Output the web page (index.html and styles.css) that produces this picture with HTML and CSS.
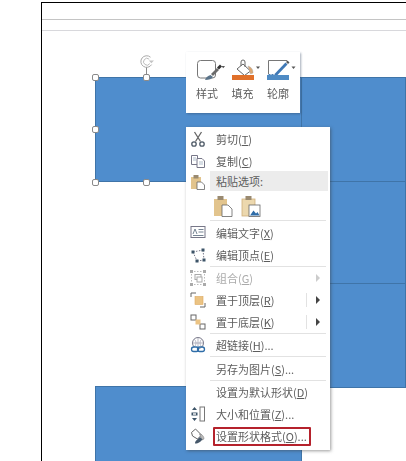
FILE: index.html
```html
<!DOCTYPE html>
<html lang="zh">
<head>
<meta charset="utf-8">
<title>设置形状格式</title>
<link rel="stylesheet" href="styles.css">
</head>
<body>
<div class="frame">
  <div class="ruler-lines"></div>

  <div class="shape s-top"></div>
  <div class="shape s-r1"></div>
  <div class="shape s-r2"></div>
  <div class="shape s-r3"></div>
  <div class="shape s-bottom"></div>

  <span class="handle h1"></span><span class="handle h2"></span><span class="handle h3"></span><span class="handle h4"></span><span class="handle h5"></span>
  <span class="rot-line"></span>
  <svg class="rot" viewBox="0 0 16 16"><path d="M11.500 3.200A5.800 5.800 0 1 0 12.600 10.600" fill="none" stroke="#aaa" stroke-width="1"/><path d="M10.200 5.200A3.400 3.400 0 1 0 10.800 9.600" fill="none" stroke="#bbb" stroke-width="1"/><path d="M9.800 6.500h5.200L12.400 9.200z" fill="#c4c4c4"/></svg>

  <div class="toolbar">
    <div class="tool">
      <div class="tool-icon">
        <svg width="29" height="24" viewBox="0 0 29 24"><rect x="1.500" y="2.500" width="18" height="17.500" rx="3" fill="#fff" stroke="#777" stroke-width="1"/><path d="M9 22c1-3 3-4 5.500-5l2.500 2c-1 2-4 3-8 3z" fill="#5a7389"/><path d="M15 16l6-6 2 2-6 6z" fill="#6b6b6b"/><path d="M21 9.500l3-3 2 2-3 3z" fill="#333"/><path d="M25.500 8h3.500l-1.750 2.200z" fill="#555"/></svg>
      </div>
      <span>样式</span>
    </div>
    <div class="tool">
      <div class="tool-icon">
        <svg width="29" height="24" viewBox="0 0 29 24"><path d="M11 6l7.500 7-6 4.500-7.500-6.500z" fill="#fff" stroke="#666" stroke-width="1"/><path d="M9 8V4a2 2 0 0 1 4 0v5" fill="none" stroke="#666"/><path d="M16 8c3 1 5 3 5 7l-2.500 1z" fill="#dca873" stroke="#aaa" stroke-width=".5"/><path d="M24 8.500h4l-2 2.500z" fill="#555"/></svg>
        <i class="bar orange"></i>
      </div>
      <span>填充</span>
    </div>
    <div class="tool">
      <div class="tool-icon">
        <svg width="29" height="24" viewBox="0 0 29 24"><path d="M20 2.500H1.500V16" fill="none" stroke="#777"/><path d="M1.500 16.500h5" stroke="#4a7fb5" stroke-dasharray="2 1"/><path d="M8 15.500l10.500-11 2 2L10 17.500l-3.500 1z" fill="#3f78b5"/><path d="M19 4l1.500-1.500 2 2L21 6z" fill="#555"/><path d="M24.500 8.500h4l-2 2.500z" fill="#555"/></svg>
        <i class="bar blue"></i>
      </div>
      <span>轮廓</span>
    </div>
  </div>

  <div class="menu">
    <div class="item">
      <svg class="ic" viewBox="0 0 16 16"><path d="M4.500 1l6 9.500M11.500 1l-6 9.500" stroke="#666" stroke-width="1.300" fill="none"/><circle cx="4" cy="13" r="2.200" fill="none" stroke="#4d5966" stroke-width="1.300"/><circle cx="12" cy="13" r="2.200" fill="none" stroke="#4d5966" stroke-width="1.300"/></svg>
      <span>剪切(<u>T</u>)</span>
    </div>
    <div class="item">
      <svg class="ic" viewBox="0 0 16 16"><path d="M1.500 2.500h6v9h-6z" fill="#fff" stroke="#778"/><path d="M7 5.500h5l2.500 2.500v6.500H7z" fill="#fff" stroke="#778"/><path d="M3 5h3M3 7h3M9 9h4M9 11h4" stroke="#9ab" stroke-width=".8"/></svg>
      <span>复制(<u>C</u>)</span>
    </div>
    <div class="item head">
      <svg class="ic" viewBox="0 0 16 16"><rect x="1" y="3" width="10" height="12" fill="#e2c48d"/><rect x="3.500" y="1" width="5" height="3.500" fill="#9a8a70"/><path d="M7 8h4.500L14.500 11v4.500H7z" fill="#fff" stroke="#666" stroke-width=".8"/></svg>
      <b>粘贴选项:</b>
    </div>
    <div class="paste">
      <svg class="ic-l" viewBox="0 0 20 22"><rect x="1" y="4" width="13" height="17" fill="#e2c48d"/><rect x="4.500" y="1" width="6" height="4" fill="#9a8a70"/><path d="M9 10h6l4 4v7.500H9z" fill="#fff" stroke="#666" stroke-width=".8"/></svg>
      <svg class="ic-l" viewBox="0 0 20 22"><rect x="1" y="4" width="13" height="17" fill="#ecd8ae" stroke="#d0b07a" stroke-width=".8"/><rect x="4.500" y="1" width="6" height="4" fill="#9a8a70"/><rect x="8" y="10" width="11" height="11.500" fill="#fff" stroke="#666" stroke-width=".8"/><path d="M9 20.500l3.500-5 2.500 3 1.500-1.500 2 3.500z" fill="#2f6da8"/></svg>
    </div>
    <hr>
    <div class="item tall">
      <svg class="ic" viewBox="0 0 16 16"><rect x="1" y="2.500" width="14" height="11" fill="#fff" stroke="#778"/><path d="M3 10l2-5 2 5M8.500 5.500h5M8.500 8h5M3 11.500h10.500" stroke="#678" stroke-width=".9" fill="none"/></svg>
      <span>编辑文字(<u>X</u>)</span>
    </div>
    <div class="item">
      <svg class="ic" viewBox="0 0 16 16"><path d="M3 5l4 9M3 5l10-2M13 3l1 10M7 14l7-1" stroke="#778" stroke-dasharray="1.500 1.500" fill="none"/><path d="M1.500 3.500h3v3h-3zM11.500 1.500h3v3h-3zM12.500 11.500h3v3h-3zM5.500 12.500h3v3h-3z" fill="#3d5468"/></svg>
      <span>编辑顶点(<u>E</u>)</span>
    </div>
    <hr>
    <div class="item off">
      <svg class="ic" viewBox="0 0 16 16"><path d="M1.500 4v8M14.500 4v8M4 1.500h8M4 14.500h8" stroke="#bbb" stroke-dasharray="1.500 1.500"/><rect x="5" y="4.500" width="6" height="5" fill="none" stroke="#aaa"/><rect x="7" y="7" width="5" height="5" fill="#fff" stroke="#aaa"/><path d="M0 0h3v3H0zM13 0h3v3h-3zM0 13h3v3H0zM13 13h3v3h-3z" fill="#aaa"/></svg>
      <span>组合(<u>G</u>)</span>
      <i class="arrow"></i>
    </div>
    <div class="item">
      <svg class="ic" viewBox="0 0 16 16"><path d="M1 5V1h5M15 11v4h-5" fill="none" stroke="#666"/><rect x="5" y="4.500" width="8" height="8" fill="#ebc383" stroke="#dca85f" stroke-width=".6"/></svg>
      <span>置于顶层(<u>R</u>)</span>
      <em></em><i class="arrow"></i>
    </div>
    <div class="item">
      <svg class="ic" viewBox="0 0 16 16"><rect x="1" y="1" width="5" height="5" fill="#fff" stroke="#666"/><rect x="10" y="10" width="5" height="5" fill="#fff" stroke="#666"/><rect x="5.500" y="5.500" width="5" height="5" fill="#ebc383"/></svg>
      <span>置于底层(<u>K</u>)</span>
      <em></em><i class="arrow"></i>
    </div>
    <hr>
    <div class="item">
      <svg class="ic" viewBox="0 0 16 16"><circle cx="8" cy="6" r="5.500" fill="#fff" stroke="#778"/><path d="M2.500 6h11M8 .5v11M4.500 2.500c2 2 2 5 0 7M11.500 2.500c-2 2-2 5 0 7" stroke="#99a" stroke-width=".7" fill="none"/><rect x="1.500" y="10" width="7" height="4.500" rx="2.200" fill="#fff" stroke="#2f6da8" stroke-width="1.300"/><rect x="7.500" y="10" width="7" height="4.500" rx="2.200" fill="none" stroke="#2f6da8" stroke-width="1.300"/></svg>
      <span>超链接(<u>H</u>)...</span>
    </div>
    <hr>
    <div class="item tall"><span>另存为图片(<u>S</u>)...</span></div>
    <hr>
    <div class="item"><span>设置为默认形状(<u>D</u>)</span></div>
    <div class="item">
      <svg class="ic" viewBox="0 0 16 16"><rect x="10" y="1" width="4.500" height="14" fill="#fff" stroke="#777"/><path d="M4.500 1l2.500 3H2zM4.500 15L2 12h5zM1.500 6.500h6v3h-6z" fill="#3d5468"/><rect x="3" y="7.300" width="3" height="1.400" fill="#fff"/></svg>
      <span>大小和位置(<u>Z</u>)...</span>
    </div>
    <div class="item">
      <svg class="ic" viewBox="0 0 16 16"><path d="M1.500 4.500l4-3.500 6 6-4 4-5-3z" fill="#fff" stroke="#666"/><path d="M9.500 6c3 .5 4.500 2.500 4.500 5l-2 1z" fill="#bbb" stroke="#777" stroke-width=".5"/><path d="M5 15.500c0-3 3-4.500 5-6.500l2.500 2.500c-2 2-3.500 4-7.500 4z" fill="#46586a"/></svg>
      <span>设置形状格式(<u>O</u>)...</span>
    </div>
    <div class="callout"></div>
  </div>
</div>
</body>
</html>
```
FILE: styles.css
```css
html, body {
  margin: 0;
  padding: 0;
  background: #fff;
}
body {
  width: 406px;
  height: 461px;
  overflow: hidden;
  font-family: "Noto Sans CJK SC", "Noto Sans", sans-serif;
  color: #5c5c5c;
}
.frame {
  position: relative;
  width: 406px;
  height: 461px;
  overflow: hidden;
}
.frame::before {
  content: "";
  position: absolute;
  left: 41px;
  top: 2px;
  right: -4px;
  bottom: -4px;
  border: 1px solid #000;
}
.ruler-lines {
  position: absolute;
  left: 42px;
  right: 0;
  top: 19px;
  height: 10px;
  border-top: 1px solid #c4c4c4;
  border-bottom: 1px solid #d8d8dc;
}
.shape {
  position: absolute;
  box-sizing: border-box;
  background: #4f8dcd;
  border: 1px solid #3f74a8;
}
.s-top { left: 95px; top: 77px; width: 207px; height: 105px; }
.s-r1 { left: 301px; top: 77px; width: 105px; height: 105px; }
.s-r2 { left: 301px; top: 181px; width: 105px; height: 103px; }
.s-r3 { left: 301px; top: 283px; width: 105px; height: 105px; }
.s-bottom { left: 95px; top: 386px; width: 207px; height: 80px; }

.handle {
  position: absolute;
  width: 5px;
  height: 5px;
  background: #fff;
  border: 1px solid #8a8a8a;
  border-radius: 2px;
}
.h1 { left: 92px; top: 74px; }
.h2 { left: 143px; top: 74px; }
.h3 { left: 92px; top: 126px; }
.h4 { left: 92px; top: 179px; }
.h5 { left: 143px; top: 179px; }
.rot-line {
  position: absolute;
  left: 146px;
  top: 67px;
  width: 1px;
  height: 8px;
  background: #8a8a8a;
}
.rot {
  position: absolute;
  left: 139px;
  top: 54px;
  width: 16px;
  height: 16px;
}

.toolbar {
  position: absolute;
  left: 186px;
  top: 52px;
  width: 114px;
  height: 61px;
  box-sizing: border-box;
  padding: 6px 0 0 10px;
  display: flex;
  gap: 6.5px;
  background: #fff;
  box-shadow: 1px 1px 2px rgba(50, 70, 100, .45);
  filter: blur(0.4px);
}
.tool {
  width: 29px;
  display: flex;
  flex-direction: column;
  font-size: 11px;
  line-height: 16px;
}
.tool-icon {
  position: relative;
  height: 25px;
  margin-bottom: 1px;
}
.tool span { margin-top: 1px; white-space: nowrap; }
.bar {
  position: absolute;
  left: 0;
  top: 17px;
  width: 22px;
  height: 5px;
}
.orange { background: #e0702a; }
.blue { background: #4f8bc4; }

.menu {
  position: absolute;
  left: 186px;
  top: 127px;
  width: 144px;
  height: 323px;
  box-sizing: border-box;
  padding: 1px 2px 0 0;
  background: #fff;
  box-shadow: 1px 1px 3px rgba(60, 60, 60, .5);
  display: flex;
  flex-direction: column;
  font-size: 11px;
  filter: blur(0.4px);
}
.item {
  position: relative;
  height: 22px;
  flex: none;
  display: flex;
  align-items: center;
  padding-left: 30px;
  white-space: nowrap;
}
.item.tall { height: 23px; }
.item.off { color: #aaa; }
.item b { font-weight: 400; }
.head {
  height: 20px;
  margin-top: -1px;
  background: #ececec;
  margin-left: 24px;
  padding-left: 6px;
}
.head .ic { left: -20px; }
.ic {
  position: absolute;
  left: 4px;
  top: 3px;
  width: 16px;
  height: 16px;
}
.paste {
  height: 29px;
  flex: none;
  display: flex;
  gap: 8px;
  align-items: center;
  padding-left: 27px;
}
.ic-l { width: 20px; height: 22px; }
hr {
  flex: none;
  height: 1px;
  margin: 0 2px 0 24px;
  border: 0;
  background: #e2e2e2;
}
.arrow {
  position: absolute;
  right: 8px;
  top: 7px;
  width: 0;
  height: 0;
  border-left: 4px solid #444;
  border-top: 4px solid transparent;
  border-bottom: 4px solid transparent;
}
.off .arrow { border-left-color: #ccc; }
.item em {
  position: absolute;
  right: 21px;
  top: 4px;
  width: 1px;
  height: 14px;
  background: #e2e2e2;
}
.callout {
  position: absolute;
  left: 27px;
  top: 300px;
  width: 98px;
  height: 19px;
  box-sizing: border-box;
  border: 2px solid #b5222c;
  border-radius: 1px;
}
```
